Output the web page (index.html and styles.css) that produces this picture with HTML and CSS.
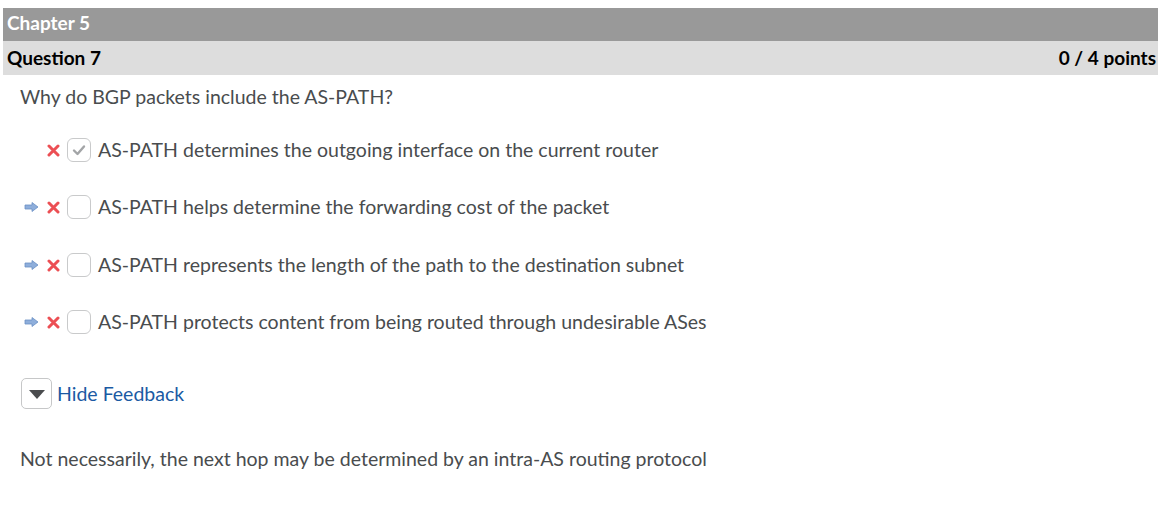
FILE: index.html
```html
<!DOCTYPE html>
<html>
<head>
<meta charset="utf-8">
<link rel="stylesheet" href="styles.css">
</head>
<body>
<div class="quiz">
  <div class="chapter">Chapter 5</div>
  <div class="qhead"><span>Question 7</span><span>0 / 4 points</span></div>
  <div class="qbody">
    <p class="prompt">Why do BGP packets include the AS-PATH?</p>
    <ul class="options">
      <li class="opt">
        <span class="arrow-slot"></span>
        <span class="xmark"><svg width="13" height="13" viewBox="0 0 13 13"><path d="M2 2 L11 11 M11 2 L2 11" stroke="#ec4f54" stroke-width="3" stroke-linecap="round"/></svg></span>
        <span class="box checked"><svg width="14" height="12" viewBox="0 0 14 12"><path d="M2 6.5 L5.5 10 L12 2.5" fill="none" stroke="#a3a5a7" stroke-width="2.4" stroke-linecap="round" stroke-linejoin="round"/></svg></span>
        <span class="label">AS-PATH determines the outgoing interface on the current router</span>
      </li>
      <li class="opt">
        <span class="arrow-slot"><svg width="15" height="10" viewBox="0 0 15 10"><path d="M1 3 H8 V0.5 L14 5 L8 9.5 V7 H1 Z" fill="#8eaedb" stroke="#6a8fc4" stroke-width="0.8"/></svg></span>
        <span class="xmark"><svg width="13" height="13" viewBox="0 0 13 13"><path d="M2 2 L11 11 M11 2 L2 11" stroke="#ec4f54" stroke-width="3" stroke-linecap="round"/></svg></span>
        <span class="box"></span>
        <span class="label">AS-PATH helps determine the forwarding cost of the packet</span>
      </li>
      <li class="opt">
        <span class="arrow-slot"><svg width="15" height="10" viewBox="0 0 15 10"><path d="M1 3 H8 V0.5 L14 5 L8 9.5 V7 H1 Z" fill="#8eaedb" stroke="#6a8fc4" stroke-width="0.8"/></svg></span>
        <span class="xmark"><svg width="13" height="13" viewBox="0 0 13 13"><path d="M2 2 L11 11 M11 2 L2 11" stroke="#ec4f54" stroke-width="3" stroke-linecap="round"/></svg></span>
        <span class="box"></span>
        <span class="label">AS-PATH represents the length of the path to the destination subnet</span>
      </li>
      <li class="opt">
        <span class="arrow-slot"><svg width="15" height="10" viewBox="0 0 15 10"><path d="M1 3 H8 V0.5 L14 5 L8 9.5 V7 H1 Z" fill="#8eaedb" stroke="#6a8fc4" stroke-width="0.8"/></svg></span>
        <span class="xmark"><svg width="13" height="13" viewBox="0 0 13 13"><path d="M2 2 L11 11 M11 2 L2 11" stroke="#ec4f54" stroke-width="3" stroke-linecap="round"/></svg></span>
        <span class="box"></span>
        <span class="label">AS-PATH protects content from being routed through undesirable ASes</span>
      </li>
    </ul>
    <div class="feedback-toggle">
      <span class="toggle-btn"><svg width="16" height="9" viewBox="0 0 16 9"><path d="M0 0 H16 L8 9 Z" fill="#4a4c4e"/></svg></span>
      <a class="toggle-link">Hide Feedback</a>
    </div>
    <p class="feedback">Not necessarily, the next hop may be determined by an intra-AS routing protocol</p>
  </div>
</div>
</body>
</html>
```
FILE: styles.css
```css
html, body {
  margin: 0;
  padding: 0;
  background: #fff;
}
body {
  padding: 8px 2px 0 3px;
  font-family: Lato, "Open Sans", sans-serif;
  color: #494c4e;
}
.quiz {
  width: 1155px;
}
.chapter {
  background: #999999;
  color: #fff;
  font-weight: bold;
  font-size: 19px;
  height: 33px;
  line-height: 30px;
  padding-left: 4px;
}
.qhead {
  background: #dddddd;
  color: #000;
  font-weight: bold;
  font-size: 19px;
  height: 34px;
  line-height: 33px;
  padding: 0 2px 0 4px;
  display: flex;
  justify-content: space-between;
}
.qbody {
  padding-left: 17px;
  font-size: 19.5px;
}
.prompt {
  margin: 0;
  padding-top: 9px;
  line-height: 26px;
}
.options {
  list-style: none;
  margin: 0;
  padding: 11px 0 0 4px;
}
.opt {
  display: flex;
  align-items: center;
  height: 57.5px;
}
.arrow-slot {
  width: 23px;
  display: flex;
  align-items: center;
}
.xmark {
  width: 20px;
  display: flex;
  align-items: center;
  margin-top: 1px;
}
.box {
  box-sizing: border-box;
  width: 24px;
  height: 24px;
  border: 1px solid #c9cacb;
  border-radius: 6px;
  background: #fff;
  display: flex;
  align-items: center;
  justify-content: center;
  margin-right: 7px;
}
.label {
  line-height: 24px;
}
.feedback-toggle {
  display: flex;
  align-items: center;
  margin-top: 27px;
  margin-left: 1px;
}
.toggle-btn {
  box-sizing: border-box;
  width: 31px;
  height: 31px;
  border: 1px solid #c6c7c8;
  border-radius: 5px;
  display: flex;
  align-items: center;
  justify-content: center;
  padding-top: 2px;
  margin-right: 5px;
}
.toggle-link {
  color: #1b5aa3;
  font-size: 19.5px;
}
.feedback {
  margin: 38px 0 0;
  line-height: 24px;
}
```
